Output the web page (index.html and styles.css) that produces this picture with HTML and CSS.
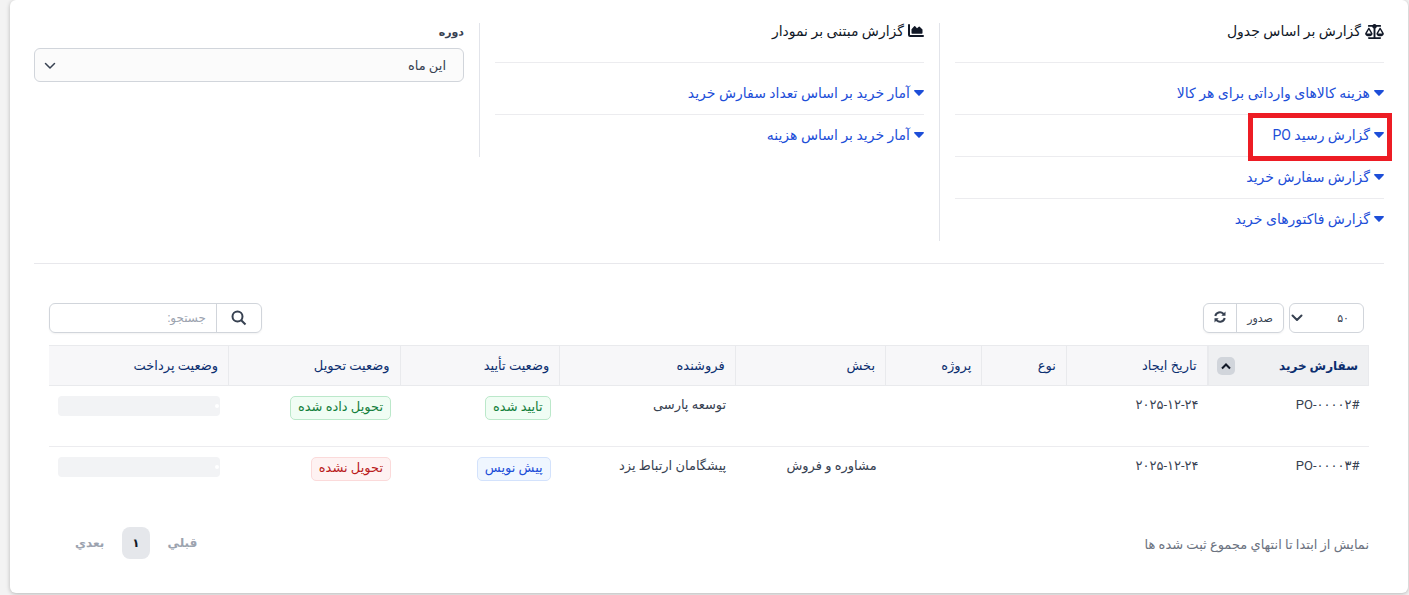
FILE: index.html
```
<!DOCTYPE html>
<html lang="fa" dir="rtl">
<head>
    <meta charset="UTF-8">
    <meta name="viewport" content="width=device-width, initial-scale=1.0">
    <title>گزارش خرید</title>
    <link rel="stylesheet" href="styles.css">
</head>
<body>
    <svg class="sprite" width="0" height="0" aria-hidden="true">
        <symbol id="caret" viewBox="0 0 10 6"><path d="M0.8 0h8.4c.7 0 1 .8.5 1.3L5.6 5.6c-.3.4-.9.4-1.2 0L.3 1.3C-.2.8.1 0 .8 0z"/></symbol>
        <symbol id="chevron" viewBox="0 0 12 8"><path d="M1.500 1.500L6 6l4.500-4.500" fill="none" stroke="currentColor" stroke-linecap="round" stroke-linejoin="round"/></symbol>
    </svg>

    <div class="panel">
        <div class="reports">
            <div class="report-col">
                <p class="report-title">
                    <svg class="icon-scale" viewBox="0 0 640 512"><path d="M384 32H512c17.700 0 32 14.300 32 32s-14.300 32-32 32H398.400c-5.200 25.800-22.900 47.100-46.400 57.300V448H512c17.700 0 32 14.300 32 32s-14.300 32-32 32H320 128c-17.700 0-32-14.300-32-32s14.300-32 32-32H288V153.300c-23.500-10.300-41.200-31.600-46.400-57.300H128c-17.700 0-32-14.300-32-32s14.300-32 32-32H256c14.600-19.400 37.800-32 64-32s49.400 12.600 64 32zm55.600 288H584.400L512 195.800 439.600 320zM512 416c-62.900 0-115.200-34-126-78.900-2.600-11 1-22.300 6.700-32.100l95.200-163.200c5-8.600 14.200-13.800 24.100-13.800s19.100 5.300 24.100 13.800l95.200 163.200c5.700 9.800 9.300 21.100 6.700 32.100C627.200 382 574.900 416 512 416zM126.800 195.800L54.400 320H199.300L126.800 195.800zM.9 337.100c-2.600-11 1-22.300 6.700-32.100l95.200-163.200c5-8.600 14.200-13.800 24.100-13.800s19.100 5.300 24.100 13.800l95.200 163.200c5.700 9.800 9.300 21.100 6.700 32.100C242 382 189.700 416 126.800 416S11.700 382 .9 337.100z"/></svg>
                    گزارش بر اساس جدول
                </p>
                <ul class="report-list">
                    <li><a href="#"><svg class="icon-caret"><use href="#caret"/></svg>هزینه کالاهای وارداتی برای هر کالا</a></li>
                    <li class="marked"><a href="#"><svg class="icon-caret"><use href="#caret"/></svg>گزارش رسید PO</a></li>
                    <li><a href="#"><svg class="icon-caret"><use href="#caret"/></svg>گزارش سفارش خرید</a></li>
                    <li><a href="#"><svg class="icon-caret"><use href="#caret"/></svg>گزارش فاکتورهای خرید</a></li>
                </ul>
            </div>
            <div class="report-col">
                <p class="report-title">
                    <svg class="icon-chart" viewBox="0 0 16 14"><path d="M1 1V11a1 1 0 0 0 1 1H15" fill="none" stroke="#111827" stroke-width="2" stroke-linecap="round"/><path d="M3.500 9V5.300L6.200 2.200a.7.7 0 0 1 1 0L9 4.200l1.800-1.500a.7.7 0 0 1 .9.100L14.500 5.500v3.500a.7.7 0 0 1-.7.700H4.200a.7.7 0 0 1-.7-.7z"/></svg>
                    گزارش مبتنی بر نمودار
                </p>
                <ul class="report-list">
                    <li><a href="#"><svg class="icon-caret"><use href="#caret"/></svg>آمار خرید بر اساس تعداد سفارش خرید</a></li>
                    <li><a href="#"><svg class="icon-caret"><use href="#caret"/></svg>آمار خرید بر اساس هزینه</a></li>
                </ul>
            </div>
            <div class="report-col">
                <label class="period-label" for="period">دوره</label>
                <div class="select-wrap">
                    <select id="period" class="period-select">
                        <option>این ماه</option>
                    </select>
                    <svg class="select-arrow"><use href="#chevron"/></svg>
                </div>
            </div>
        </div>

        <div class="table-area">
            <div class="toolbar">
                <div class="toolbar-group">
                    <div class="select-wrap">
                        <select class="length-select" aria-label="تعداد">
                            <option>۵۰</option>
                        </select>
                        <svg class="select-arrow length-arrow"><use href="#chevron"/></svg>
                    </div>
                    <div class="btn-group">
                        <button type="button" class="btn-export">صدور</button>
                        <button type="button" class="btn-reload" aria-label="بارگذاری مجدد">
                            <svg class="icon-reload" viewBox="0 0 12 12" fill="none" stroke="currentColor" stroke-width="2"><path d="M1.300 5A4.700 4.700 0 0 1 9.300 2.700L10.300 3.700"/><path d="M10.700 7A4.700 4.700 0 0 1 2.700 9.300L1.700 8.300"/><path d="M11.500 .6V4.800H7.300zM.5 11.400V7.200H4.700z" fill="currentColor" stroke="none"/></svg>
                        </button>
                    </div>
                </div>
                <div class="search-group">
                    <button type="button" class="btn-search" aria-label="جستجو">
                        <svg class="icon-search" viewBox="0 0 16 16" fill="none" stroke="currentColor" stroke-width="2"><circle cx="6.500" cy="6.500" r="5"/><path d="M10.200 10.200L14.500 14.500"/></svg>
                    </button>
                    <input type="search" placeholder="جستجو:" aria-label="جستجو">
                </div>
            </div>

            <table class="orders">
                <colgroup>
                    <col class="c-order"><col class="c-date"><col class="c-type"><col class="c-project"><col class="c-section"><col class="c-vendor"><col class="c-approve"><col class="c-delivery"><col class="c-payment">
                </colgroup>
                <thead>
                    <tr>
                        <th class="sorted"><div class="th-sort">سفارش خرید <span class="sort-badge"><svg viewBox="0 0 12 8"><path d="M2 6.500L6 2.500l4 4" fill="none" stroke="currentColor" stroke-width="2"/></svg></span></div></th>
                        <th>تاریخ ایجاد</th>
                        <th>نوع</th>
                        <th>پروژه</th>
                        <th>بخش</th>
                        <th>فروشنده</th>
                        <th>وضعیت تأیید</th>
                        <th>وضعیت تحویل</th>
                        <th>وضعیت پرداخت</th>
                    </tr>
                </thead>
                <tbody>
                    <tr>
                        <td>#PO-۰۰۰۰۲</td>
                        <td>۲۰۲۵-۱۲-۲۴</td>
                        <td></td>
                        <td></td>
                        <td></td>
                        <td>توسعه پارسی</td>
                        <td><span class="tag green">تایید شده</span></td>
                        <td><span class="tag green">تحویل داده شده</span></td>
                        <td><div class="progress"><span></span></div></td>
                    </tr>
                    <tr>
                        <td>#PO-۰۰۰۰۳</td>
                        <td>۲۰۲۵-۱۲-۲۴</td>
                        <td></td>
                        <td></td>
                        <td>مشاوره و فروش</td>
                        <td>پیشگامان ارتباط یزد</td>
                        <td><span class="tag blue">پیش نویس</span></td>
                        <td><span class="tag red">تحویل نشده</span></td>
                        <td><div class="progress"><span></span></div></td>
                    </tr>
                </tbody>
            </table>

            <div class="table-footer">
                <div class="info">نمایش از ابتدا تا انتهاي مجموع ثبت شده ها</div>
                <nav class="pagination">
                    <a href="#">قبلي</a>
                    <a href="#" class="active">۱</a>
                    <a href="#">بعدي</a>
                </nav>
            </div>
        </div>
    </div>
</body>
</html>
```
FILE: styles.css
```
*, *::after {
    box-sizing: border-box;
}
body {
    margin: 0;
    font-family: Roboto, "DejaVu Sans", sans-serif;
    font-size: 13px;
    line-height: 20px;
    color: #374151;
    background: #f3f3f3;
}
button, input, select {
    font-family: inherit;
    font-size: 12px;
    color: #374151;
    margin: 0;
}
a {
    text-decoration: none;
}
.sprite {
    position: absolute;
}
.panel {
    margin: 0 1px 2px 10px;
    padding: 23px 24px 34px;
    background: #fff;
    border-radius: 6px;
    box-shadow: 0 1px 4px rgba(0, 0, 0, 0.25);
}

/* report lists */
.reports {
    display: grid;
    grid-template-columns: repeat(3, 1fr);
    align-items: start;
    margin: 0 -15px 22px;
}
.report-col {
    padding: 0 15px;
    border-left: 1px solid #e2e4ea;
}
.report-col:last-child {
    border-left: none;
}
.report-title {
    display: flex;
    align-items: center;
    gap: 4px;
    height: 40px;
    margin: 0;
    padding-bottom: 23px;
    font-size: 14px;
    color: #111827;
    border-bottom: 1px solid #ececef;
}
.icon-scale {
    width: 19px;
    height: 15px;
    fill: #111827;
}
.icon-chart {
    width: 16px;
    height: 14px;
    fill: #111827;
}
.report-list {
    list-style: none;
    margin: 0;
    padding: 10px 0 0;
}
.report-list li {
    height: 42px;
    padding: 10px 0;
    border-bottom: 1px solid #ececef;
}
.report-list li:last-child {
    border-bottom: none;
}
.report-list a {
    display: flex;
    align-items: center;
    gap: 4px;
    font-size: 14px;
    color: #1d4ed8;
}
.icon-caret {
    width: 10px;
    height: 6px;
    fill: #1d4ed8;
}
.marked {
    position: relative;
}
.marked::after {
    content: "";
    position: absolute;
    top: -2px;
    right: -8px;
    width: 144px;
    height: 48px;
    border: 5px solid #ed1c24;
    pointer-events: none;
}
.period-label {
    display: block;
    height: 25px;
    font-weight: bold;
    font-size: 11px;
}
.select-wrap {
    position: relative;
}
select {
    appearance: none;
    border: 1px solid #d1d5db;
    border-radius: 6px;
    background: #fff;
}
.period-select {
    width: 100%;
    height: 34px;
    padding: 0 17px;
    font-size: 13px;
    background: #fbfbfb;
}
.select-arrow {
    position: absolute;
    left: 10px;
    top: 14px;
    width: 12px;
    height: 8px;
    stroke-width: 1.5px;
    pointer-events: none;
}

/* orders table */
.table-area {
    padding: 39px 15px 0;
    border-top: 1px solid #e8e8ec;
}
.toolbar {
    display: flex;
    justify-content: space-between;
    padding-right: 5px;
    margin-bottom: 12px;
}
.toolbar-group {
    display: flex;
    gap: 5px;
}
.length-select {
    width: 75px;
    height: 30px;
    padding: 0 14px;
    font-size: 11px;
}
.length-arrow {
    left: 2px;
    top: 11px;
    stroke-width: 2px;
}
.btn-group, .search-group {
    display: flex;
    height: 30px;
    border: 1px solid #d1d5db;
    border-radius: 6px;
    box-shadow: 0 1px 2px rgba(0, 0, 0, 0.05);
}
.btn-group button, .search-group button {
    padding: 0;
    border: none;
    border-left: 1px solid #d1d5db;
    background: none;
    cursor: pointer;
}
.btn-group .btn-export {
    width: 47px;
    font-size: 11px;
}
.btn-group .btn-reload {
    width: 32px;
    border-left: none;
}
.icon-reload {
    width: 12px;
    height: 12px;
}
.search-group .btn-search {
    width: 45px;
}
.icon-search {
    width: 16px;
    height: 16px;
    vertical-align: middle;
}
.search-group input {
    width: 166px;
    padding: 0 10px;
    border: none;
    background: none;
    outline: none;
}
.search-group input::placeholder {
    color: #9ca3af;
}
.orders {
    width: 100%;
    table-layout: fixed;
    border-collapse: collapse;
}
.c-order { width: 12.2%; }
.c-date { width: 10.7%; }
.c-type { width: 6.4%; }
.c-project { width: 7.3%; }
.c-section { width: 11.4%; }
.c-vendor { width: 13.3%; }
.c-approve { width: 12.1%; }
.c-delivery { width: 13%; }
.c-payment { width: 13.6%; }
.orders th {
    height: 40px;
    padding: 0 10px;
    text-align: right;
    font-weight: normal;
    color: #0b2e6f;
    background: #f7f7f9;
    border: 1px solid #e9eaed;
}
.orders th:last-child {
    border-left: none;
}
.orders .sorted {
    padding-left: 8px;
    font-size: 12px;
    font-weight: bold;
    background: #eff0f2;
    border-left-width: 2px;
}
.th-sort {
    display: flex;
    align-items: center;
    justify-content: space-between;
}
.sort-badge {
    display: flex;
    align-items: center;
    justify-content: center;
    width: 18px;
    height: 18px;
    border-radius: 5px;
    color: #111827;
    background: #d1d5db;
}
.sort-badge svg {
    width: 12px;
    height: 8px;
}
.orders td {
    height: 61px;
    padding: 9px 9px 0;
    vertical-align: top;
}
.orders tbody tr + tr {
    border-top: 1px solid #ececef;
}
.tag {
    display: inline-block;
    height: 24px;
    margin-top: 1px;
    padding: 0 7px;
    line-height: 20px;
    border: 1px solid;
    border-radius: 5px;
    white-space: nowrap;
}
.green {
    color: #15803d;
    background: #f0fdf4;
    border-color: #bbe8ca;
}
.blue {
    color: #1d4ed8;
    background: #eff6ff;
    border-color: #d3e2fc;
}
.red {
    color: #b91c1c;
    background: #fef2f2;
    border-color: #fbdada;
}
.progress {
    display: flex;
    align-items: center;
    height: 20px;
    margin-top: 1px;
    padding: 0 1px;
    border-radius: 4px;
    background: #f2f3f5;
}
.progress span {
    width: 4px;
    height: 4px;
    border-radius: 50%;
    background: #fff;
}
.table-footer {
    display: flex;
    justify-content: space-between;
    align-items: flex-end;
    margin-top: 19px;
    padding-left: 16px;
}
.info {
    padding-bottom: 4px;
    color: #6b7280;
}
.pagination {
    display: flex;
    gap: 8px;
}
.pagination a {
    padding: 6px 10px;
    font-size: 12px;
    font-weight: bold;
    color: #9ca3af;
    border-radius: 8px;
}
.pagination .active {
    color: #111827;
    background: #e5e7eb;
}
```
